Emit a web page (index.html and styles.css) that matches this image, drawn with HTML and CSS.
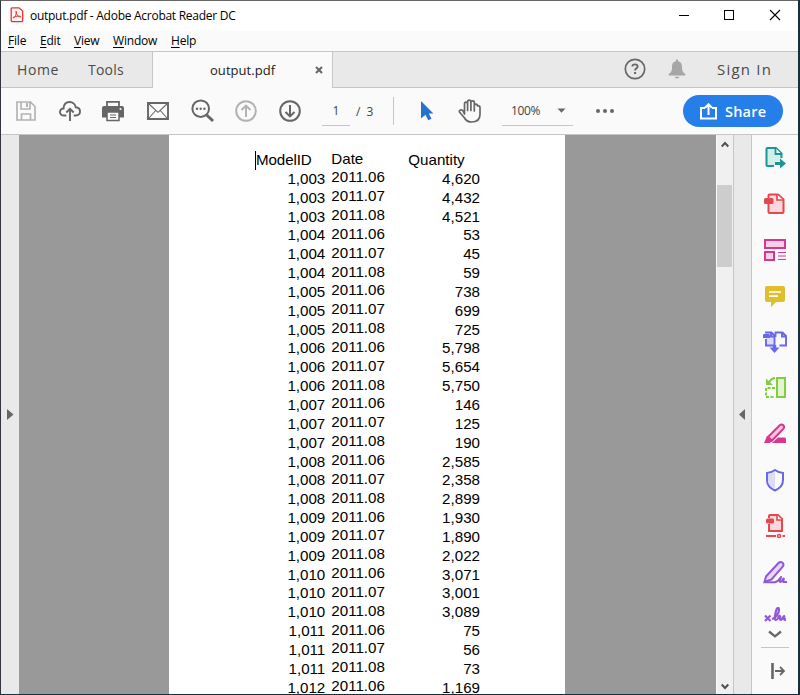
FILE: index.html
```html
<!DOCTYPE html>
<html lang="en">
<head>
<meta charset="utf-8">
<title>output.pdf - Adobe Acrobat Reader DC</title>
<link rel="stylesheet" href="styles.css">
</head>
<body>
<div class="window">
  <header class="titlebar">
    <svg class="app" width="14" height="16" viewBox="0 0 14 16"><path d="M2.500 .8H9L12.700 4v9.500q0 1.200-1.200 1.200h-9Q1.200 14.700 1.200 13.500V2Q1.200.8 2.500.8Z" fill="#fff5f4" stroke="#e8352e" stroke-width="1.300"/><path d="M3.500 11c1.500-1.200 3.300-4 3-6.200-.1-1-.9-.5-.6.600.5 1.900 1.900 3.700 4 4.500 1.100.4 1.300-.5.200-.7-2.200-.3-4.300.1-6.400 1-1 .5-.9 1.400-.2.800Z" fill="none" stroke="#e8352e" stroke-width="1"/></svg>
    <span class="title">output.pdf - Adobe Acrobat Reader DC</span>
    <svg class="winbtns" width="102" height="12" viewBox="0 0 102 12" fill="none" stroke="#000" shape-rendering="crispEdges"><path d="M0 6.500H10M45.500 1.500h9v9h-9Z"/><path d="M91 1l10 10M101 1L91 11" shape-rendering="auto" stroke-width="1.100"/></svg>
  </header>
  <nav class="menu"><span class="m1"><u>F</u>ile</span><span class="m2"><u>E</u>dit</span><span class="m3"><u>V</u>iew</span><span class="m4"><u>W</u>indow</span><span class="m5"><u>H</u>elp</span></nav>
  <div class="tabs">
    <div class="tabs-left"><span class="home">Home</span><span class="tools">Tools</span></div>
    <div class="tab"><span class="tabname">output.pdf</span><svg width="8" height="8" viewBox="0 0 8 8" stroke="#666" stroke-width="2"><path d="M1 1l6 6M7 1L1 7"/></svg></div>
    <div class="tabs-right">
      <svg width="22" height="22" viewBox="0 0 22 22" fill="none" stroke="#666"><circle cx="11" cy="11" r="9.700" stroke-width="1.700"/><path d="M8.300 8.500q.2-2.100 2.700-2.100t2.600 2q0 1.200-1.300 2-1.200.7-1.200 2" stroke-width="1.900"/><path d="M11.100 14v2" stroke-width="2"/></svg>
      <svg class="bell" width="18" height="20" viewBox="0 0 18 20" fill="#a6a6a6"><path d="M8 .5h2v1.700c3.200.6 4 3 4 6 0 3.600.8 5.200 3.300 6.800v1.500H.7V15C3.200 13.400 4 11.800 4 8.200c0-3 .8-5.400 4-6ZM6.500 17.700h5q-.7 1.800-2.500 1.800t-2.500-1.800Z"/></svg>
      <span class="signin">Sign In</span>
    </div>
  </div>
  <div class="toolbar">
    <div class="tools-row">
      <svg width="20" height="20" viewBox="0 0 20 20" fill="none" stroke="#b3b3b3" stroke-width="1.700"><path d="M1 1h13.500L19 5.500V19H1ZM5 1v7h9V1M5.500 19v-6h9v6"/><path d="M11 2v4" stroke-width="2"/></svg>
      <svg class="i2" width="22" height="21" viewBox="0 0 22 21" fill="none" stroke="#666" stroke-width="1.900"><path d="M7.300 14.500H5C2.500 14.500 1 13 1 11s1.500-3.500 3.500-3.500C4.500 3.500 7 1 10.500 1s6 2.500 6.200 5.300C19.500 6.500 21 8 21 10.500s-1.700 4-4 4h-2.300"/><path d="M11 20V8M7.300 11.500L11 7.800l3.700 3.700"/></svg>
      <svg class="i3" width="22" height="22" viewBox="0 0 22 22"><path d="M5 6V1.800h12V6" fill="#fafafa" stroke="#666" stroke-width="1.800"/><path d="M2 6h18q2 0 2 2v9.500H0V8q0-2 2-2Z" fill="#666"/><circle cx="18.500" cy="9" r="1" fill="#fafafa"/><path d="M5 12h12v8.500H5Z" fill="#fafafa" stroke="#666" stroke-width="1.500"/><path d="M8 15h6M8 17.500h6" stroke="#666" stroke-width="1.200"/></svg>
      <svg class="i4" width="22" height="18" viewBox="0 0 22 18" fill="none" stroke="#666"><path d="M1 1h20v16H1Z" stroke-width="1.900"/><path d="M2 2l9 8.300L20 2M2 16l6.700-7.500M20 16l-6.700-7.500" stroke-width="1.100"/></svg>
      <svg class="i5" width="24" height="24" viewBox="0 0 24 24" fill="none" stroke="#666"><circle cx="9.700" cy="9.700" r="8.300" stroke-width="2"/><path d="M15.700 16l6.300 6" stroke-width="3"/><g fill="#666" stroke="none"><circle cx="6" cy="9.700" r="1.200"/><circle cx="9.700" cy="9.700" r="1.200"/><circle cx="13.400" cy="9.700" r="1.200"/></g></svg>
      <svg class="i6" width="22" height="22" viewBox="0 0 22 22" fill="none" stroke="#b3b3b3" stroke-width="2"><circle cx="11" cy="11" r="9.800"/><path d="M11 17V6M6.500 10L11 5.600l4.500 4.400"/></svg>
      <svg class="i7" width="22" height="22" viewBox="0 0 22 22" fill="none" stroke="#666" stroke-width="2"><circle cx="11" cy="11" r="9.800"/><path d="M11 5v11M6.500 12l4.500 4.400 4.500-4.400"/></svg>
      <span class="pageno">1</span><span class="pages"><i>/</i>3</span><span class="divider"></span>
      <svg class="arrow" width="14" height="22" viewBox="0 0 14 22"><path d="M1 1L13.400 13.400H8.800l2.700 5.400-3.300 1.500-2.700-5.500L1 18.500Z" fill="#2374cf"/></svg>
      <svg class="hand" width="24" height="24" viewBox="0 0 24 24" fill="none" stroke="#666" stroke-width="1.700" stroke-linecap="round" stroke-linejoin="round"><path d="M6.500 15V5q0-1.800 1.500-1.800T9.600 5v6.500V2.800Q9.600 1.200 11.200 1.200T12.900 2.800v8.700V3.400q0-1.600 1.700-1.600t1.700 1.600V12V6.800q0-1.700 1.600-1.700t1.600 1.700h1.200q1.300 0 1.300 1.600V15.500c0 5-3 7.500-8.500 7.500-3.500 0-5.800-1.500-7.300-4.500L1.600 13.300q-.8-1.700.9-2.300t2.500.9L6.500 15"/></svg>
      <span class="zoom">100%<svg width="9" height="5" viewBox="0 0 9 5"><path d="M.5 .5h8L4.500 4.800Z" fill="#666"/></svg></span>
      <svg class="dots" width="18" height="4" viewBox="0 0 18 4" fill="#666"><circle cx="2" cy="2" r="2"/><circle cx="9" cy="2" r="2"/><circle cx="16" cy="2" r="2"/></svg>
    </div>
    <div class="share"><svg width="17" height="17" viewBox="0 0 17 17" fill="none" stroke="#fff" stroke-width="2"><path d="M5 5H1v10.500h15V5h-4M8.500 12V2M5 4.800l3.500-3.500L12 4.800"/></svg>Share</div>
  </div>
  <main>
    <div class="leftrail"><svg width="7" height="11" viewBox="0 0 7 11"><path d="M0 0l6.500 5.500L0 11Z" fill="#666"/></svg></div>
    <section class="viewport"><div class="paper"><div id="data" class="data"></div></div></section>
    <div class="scroll">
      <svg width="8" height="7" viewBox="0 0 8 7" fill="none" stroke="#505050" stroke-width="2"><path d="M.7 5.500L4 2l3.300 3.500"/></svg>
      <div class="thumb"></div>
      <svg class="down" width="8" height="7" viewBox="0 0 8 7" fill="none" stroke="#505050" stroke-width="2"><path d="M.7 1.500L4 5l3.300-3.500"/></svg>
    </div>
    <div class="collapse"><svg width="6" height="11" viewBox="0 0 6 11"><path d="M6 0L0 5.500 6 11Z" fill="#666"/></svg></div>
    <aside>
      <div class="tool"><svg width="24" height="24" viewBox="0 0 24 24"><path d="M18.500 12V7L13 2H4.500q-1 0-1 1v16q0 1 1 1H11l2-5h5.500" fill="#d3edea" stroke="none"/><path d="M18.500 12V7.500L13 2H4.500q-1 0-1 1v16q0 1 1 1H11" fill="none" stroke="#1a9696" stroke-width="2"/><path d="M12.500 2v6h6" fill="#fafafa" stroke="#1a9696" stroke-width="1.800"/><path d="M12 17.500h7" stroke="#1a9696" stroke-width="3"/><path d="M17 12.500l6 5-6 5Z" fill="#1a9696"/></svg></div>
      <div class="tool"><svg width="24" height="24" viewBox="0 0 24 24"><path d="M5.500 6V3.500q0-1 1-1H15l5.500 5V20q0 1-1 1H6.500q-1 0-1-1v-8" fill="#f9d7da" stroke="#e34850" stroke-width="2"/><path d="M14 2.500v5.500h6" fill="#fff" stroke="#e34850" stroke-width="1.700"/><rect x="1" y="6" width="9.500" height="6" rx="1.500" fill="#e34850"/></svg></div>
      <div class="tool"><svg width="24" height="24" viewBox="0 0 24 24" fill="#f5d1e7" stroke="#d83790" stroke-width="2"><path d="M2 2h20v8H2ZM2 14h9v8H2Z"/><path d="M15 14.500h8M15 18h8M15 21.500h8" stroke-width="1.200"/></svg></div>
      <div class="tool"><svg width="24" height="24" viewBox="0 0 24 24"><path d="M4 2h16q2 0 2 2v12q0 2-2 2h-7l-5 5v-5H4q-2 0-2-2V4q0-2 2-2Z" fill="#dfbf2b"/><path d="M6 8h12M6 12.200h9" stroke="#fff" stroke-width="1.700"/></svg></div>
      <div class="tool"><svg width="26" height="24" viewBox="0 0 26 24" fill="none" stroke="#6769e8" stroke-width="1.900"><path d="M4 3.500V2.500h5.500l3 3v10H4V9" fill="#dddcf9"/><path d="M13.500 7V2.500h7l3.500 3.500v9.500h-6.500M20 2.500v4h4M9 2.500v4h3.500"/><path d="M2 4h4.500q1.500 0 1.500 2v2H1V5q0-1 1-1Z" fill="#6769e8" stroke="none"/><path d="M12.500 15v5" stroke-width="3.500"/><path d="M7.500 17.500h10l-5 5.500Z" fill="#6769e8" stroke="none"/></svg></div>
      <div class="tool"><svg width="24" height="24" viewBox="0 0 24 24" fill="none" stroke="#7fcf3f" stroke-width="2"><path d="M14 2h8v19h-8Z" fill="#e2f4d3"/><path d="M12 12H3v9h9" stroke-dasharray="3 1.500"/><path d="M12 2Q9 2 6 6"/><path d="M3 2.500V9h7Z" fill="#7fcf3f" stroke="none"/></svg></div>
      <div class="tool"><svg width="24" height="24" viewBox="0 0 24 24"><path d="M5 15L16.500 3.500q2-2 3.800-.2t-.2 3.800L9 18.500Z" fill="#f5c6df" stroke="#d83790" stroke-width="2"/><path d="M4 14l6 5-3.500 2H1Z" fill="#d83790"/><path d="M9 21l6-5.500h6.500q1.500 0 1.500 1.500v4Z" fill="#d83790"/></svg></div>
      <div class="tool"><svg width="24" height="24" viewBox="0 0 24 24"><path d="M12 2q4 3 8 3v7q0 7-8 10.500Q4 19 4 12V5q4 0 8-3Z" fill="#fafafa" stroke="#6769e8" stroke-width="2"/><path d="M12 3.500Q9 5.500 5 6v6q0 6 7 9Z" fill="#dddcf9"/></svg></div>
      <div class="tool"><svg width="24" height="26" viewBox="0 0 24 26" fill="none" stroke="#e34850" stroke-width="2"><path d="M6 5V3q0-1 1-1h8l4 4V18H6v-7" fill="#f9d7da"/><path d="M14 2v5h5" fill="#fff" stroke-width="1.600"/><rect x="3" y="5.500" width="8" height="5" rx="1.500" fill="#e34850" stroke="none"/><path d="M3 23h10M19.500 23H22"/><circle cx="16" cy="23" r="1.500" stroke-width="1.500"/></svg></div>
      <div class="tool"><svg width="25" height="25" viewBox="0 0 25 25" fill="none" stroke="#9256d9" stroke-width="2"><path d="M3 16.500L15.500 3q2-2 4-.2t0 4L8.500 19.500 1.500 22Z" fill="#e7d8f7"/><path d="M1.500 22.300H12c4-1 5.500-5 6-5.300s-2.500 5-.5 5 2-3.500 3-3.500-1 3.500 0 3.500h3.500"/></svg></div>
      <div class="sign"><svg width="22" height="18" viewBox="0 0 22 18" fill="none" stroke="#9256d9" stroke-width="2.200"><path d="M1 8.500l5.500 5.500M6.500 8.500L1 14"/><path d="M8 12c4-1 7-6 7-9s-2-3-3 1-2 9 0 9 3-5 4-4-1 4 1 4 2-4 3-4-1 4 1 4l1.500-1"/></svg></div>
      <svg class="more" width="14" height="8" viewBox="0 0 14 8" fill="none" stroke="#666" stroke-width="2.300"><path d="M1 1.500L7 6.300 13 1.500"/></svg>
      <div class="rule"></div>
      <svg class="hide" width="14" height="16" viewBox="0 0 14 16" fill="none" stroke="#666"><path d="M1.500 0v16" stroke-width="2.600"/><path d="M4 8h9M9 4l4 4-4 4" stroke-width="1.800"/></svg>
    </aside>
  </main>
</div>
<script src="data.js"></script>
</body>
</html>
```
FILE: styles.css
```css
* { box-sizing: border-box; }
body { margin: 0; background: #17303a; font-family: "Open Sans", "Noto Sans", sans-serif; overflow: hidden; }
svg { display: block; flex: none; }
span { white-space: nowrap; }
.window { width: 798px; height: 694px; margin-right: 2px; border-top: 1px solid #666; border-left: 1px solid #34343c; background: #fafafa; display: flex; flex-direction: column; }
.titlebar { height: 30px; background: #fff; display: flex; align-items: center; padding: 0 17px 2px 9px; flex: none; }
.title { font-size: 12px; letter-spacing: -.27px; color: #000; margin-left: 6px; flex: 1; position: relative; }
.menu { height: 20px; flex: none; display: flex; font-size: 12px; line-height: 19px; color: #000; padding-left: 7px; letter-spacing: -.2px; }
.menu u { text-underline-offset: 2px; }
.m1 { width: 32px; }
.m2 { width: 34px; }
.m3 { width: 39px; }
.m4 { width: 58px; }
.tabs { height: 37px; flex: none; display: flex; border-top: 1px solid #c6c6c6; color: #4b4b4b; font-size: 14px; }
.tabs-left, .tabs-right { background: #e9e9e9; border-bottom: 1px solid #c6c6c6; display: flex; align-items: center; }
.tabs-left { width: 152px; border-right: 1px solid #c6c6c6; padding-left: 16px; }
.home { width: 71px; letter-spacing: .6px; }
.tools { letter-spacing: .2px; }
.tab { width: 180px; display: flex; align-items: center; border-right: 1px solid #c6c6c6; color: #222; font-size: 13px; }
.tabname { width: 109px; margin-left: 57px; letter-spacing: .05px; margin-right: -4px; }
.tabs-right { flex: 1; padding: 0 0 2px 291px; }
.bell { margin-left: 22px; }
.signin { font-size: 15px; margin-left: 31px; letter-spacing: 1.200px; }
.toolbar { height: 47px; flex: none; display: flex; align-items: center; justify-content: space-between; border-bottom: 1px solid #c6c6c6; padding: 0 15px; color: #444; font-size: 12px; }
.tools-row { display: flex; align-items: center; }
.i2 { margin-left: 23px; }
.i3 { margin-left: 21px; }
.i4 { margin-left: 23px; }
.i5 { margin-left: 22px; }
.i6 { margin-left: 20px; }
.i7 { margin-left: 22px; }
.pageno { width: 28px; height: 29px; margin-left: 21px; border-bottom: 1px solid #c6c6c6; text-align: center; line-height: 28px; }
.pages { width: 37px; padding-left: 6px; }
.pages i { font-style: normal; margin-right: 6px; }
.divider { width: 1px; height: 28px; margin-left: 6px; background: #c6c6c6; }
.arrow { margin-left: 26px; }
.hand { margin-left: 24px; }
.zoom { display: flex; align-items: center; width: 71px; height: 29px; margin-left: 20px; padding: 0 7px 0 9px; border-bottom: 1px solid #c6c6c6; justify-content: space-between; letter-spacing: -.4px; }
.dots { margin-left: 23px; }
.share { width: 100px; height: 32px; border-radius: 16px; background: #267fe8; color: #fff; font-size: 14.500px; font-weight: 600; display: flex; align-items: center; padding-left: 17px; gap: 8px; letter-spacing: .2px; }
main { flex: 1; min-height: 0; display: flex; }
.leftrail { width: 18px; background: #e9e9e9; display: flex; align-items: center; justify-content: center; }
.viewport { width: 697px; flex: none; background: #999; display: flex; padding-left: 150px; }
.paper { width: 396px; background: #fff; overflow: hidden; padding-top: 16px; }
.data { font: 15.150px/18.840px "Liberation Sans", Arial, sans-serif; color: #000; }
.row { display: grid; grid-template-columns: 156.300px 6px 77px 71.700px; }
.row span { text-align: right; }
.row .date { grid-column: 3; text-align: left; position: relative; top: -1.500px; }
.row .model.head { text-align: left; margin-left: 86px; border-left: 1px solid #000; letter-spacing: -.1px; }
.row .qty.head { text-align: left; }
.scroll { width: 17px; flex: none; background: #f0f0f0; display: flex; flex-direction: column; align-items: center; padding: 6px 0 4px; border-left: 1px solid #fafafa; }
.thumb { width: 15px; height: 82px; background: #cdcdcd; margin-top: 37px; align-self: flex-start; }
.down { margin-top: auto; }
.collapse { width: 19px; flex: none; background: #e9e9e9; border-left: 1px solid #c6c6c6; border-right: 1px solid #c6c6c6; display: flex; align-items: center; justify-content: center; padding-right: 2px; }
aside { flex: 1; background: #fafafa; display: flex; flex-direction: column; align-items: center; }
.tool { height: 46.050px; flex: none; display: flex; align-items: center; }
.sign { height: 20px; overflow: hidden; margin-top: 11.500px; }
.more { margin-top: 3px; }
.rule { width: 28px; height: 1px; background: #c6c6c6; margin-top: 9px; }
.hide { margin: 15px 0 0 5px; }
```
FILE: data.js
```js
const quantities = ["4,620", "4,432", "4,521", "53", "45", "59", "738", "699", "725", "5,798", "5,654", "5,750", "146", "125", "190", "2,585", "2,358", "2,899", "1,930", "1,890", "2,022", "3,071", "3,001", "3,089", "75", "56", "73", "1,169"];
const rows = quantities.map((q, i) => [`1,${String(3 + Math.floor(i / 3)).padStart(3, "0")}`, `2011.0${6 + i % 3}`, q]);
const row = (cells, head) => `<div class="row"><span class="model${head}">${cells[0]}</span><span class="date">${cells[1]}</span><span class="qty${head}">${cells[2]}</span></div>`;
document.getElementById("data").innerHTML = row(["ModelID", "Date", "Quantity"], " head") + rows.map(r => row(r, "")).join("");
```
